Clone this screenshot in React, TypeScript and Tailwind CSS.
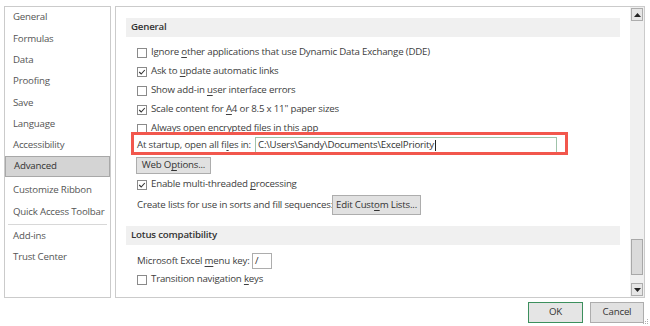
import React from 'react'

const NAV_TOP = ['General', 'Formulas', 'Data', 'Proofing', 'Save', 'Language', 'Accessibility']

function Check({ checked }: { checked?: boolean }) {
  return (
    <span className="w-[10px] h-[10px] border border-[#8a8a8a] bg-white flex items-center justify-center shrink-0">
      {checked && (
        <svg width="8" height="8" viewBox="0 0 8 8">
          <polyline points="1.2,4 3.2,6 6.8,2" fill="none" stroke="#333" strokeWidth="1.1" />
        </svg>
      )}
    </span>
  )
}

function CheckRow({ checked, children }: { checked?: boolean; children: React.ReactNode }) {
  return (
    <div className="h-[19px] flex items-center pl-[11px] gap-[4px]">
      <Check checked={checked} />
      <span className="whitespace-nowrap">{children}</span>
    </div>
  )
}

function U({ children }: { children: React.ReactNode }) {
  return <span className="underline underline-offset-2">{children}</span>
}

function Header({ children }: { children: React.ReactNode }) {
  return (
    <div className="h-[19px] mr-[10px] bg-[#f0f0f0] flex items-center pl-[5px] font-semibold text-[#333]">
      {children}
    </div>
  )
}

export default function App() {
  return (
    <div className="w-[650px] h-[326px] bg-white text-[9.7px] tracking-[-0.2px] text-[#404040] font-['Open_Sans',sans-serif] flex flex-col overflow-hidden relative">
      <div className="flex pt-[6px] pl-[4px] gap-[4px] h-[298px]">
        {/* Left nav */}
        <div className="w-[107px] border border-[#cbcbcb] flex flex-col text-[#555] whitespace-nowrap">
          {NAV_TOP.map((n) => (
            <div key={n} className="h-[21.3px] flex items-center pl-[8px]">{n}</div>
          ))}
          <div className="h-[21px] flex items-center pl-[8px] bg-[#d4d4d4] border border-[#a8a8a8] text-[#333]">Advanced</div>
          <div className="h-[3px]" />
          <div className="h-[21.3px] flex items-center pl-[8px]">Customize Ribbon</div>
          <div className="h-[21.3px] flex items-center pl-[8px]">Quick Access Toolbar</div>
          <div className="h-px bg-[#d8d8d8] mx-[3px] my-[1px]" />
          <div className="h-[21.3px] flex items-center pl-[8px]">Add-ins</div>
          <div className="h-[21.3px] flex items-center pl-[8px]">Trust Center</div>
        </div>

        {/* Right panel */}
        <div className="w-[530px] border border-[#cbcbcb] flex">
          <div className="flex-1 flex flex-col pl-[10px] pt-[11px] whitespace-nowrap">
            <Header>General</Header>
            <div className="h-[6px]" />
            <CheckRow>Ignore <U>o</U>ther applications that use Dynamic Data Exchange (DDE)</CheckRow>
            <CheckRow checked>Ask to <U>u</U>pdate automatic links</CheckRow>
            <CheckRow>Show add-in <U>u</U>ser interface errors</CheckRow>
            <CheckRow checked>Scale content for <U>A</U>4 or 8.5 x 11" paper sizes</CheckRow>
            <CheckRow>Always open encrypted files in this app</CheckRow>

            <div className="relative h-[16px] flex items-center pl-[11px] -mt-[1px]">
              <span className="w-[118px] shrink-0">At startup, open all fi<U>l</U>es in:</span>
              <div className="w-[302px] h-[16px] border border-[#9fc3aa] flex items-center pl-[2px] text-[#333]">
                <span>C:\Users\Sandy\Documents\ExcelPriority</span>
                <span className="w-px h-[11px] bg-[#222] ml-px" />
              </div>
              <div className="absolute left-[5px] top-[-5px] w-[437px] h-[23px] border-[3px] border-[#f2574d]" />
            </div>

            <div className="h-[4px]" />
            <div className="pl-[10px]">
              <div className="w-[75px] h-[17px] bg-[#e1e1e1] border border-[#adadad] flex items-center justify-center text-[#333]">
                <span>Web O<U>p</U>tions...</span>
              </div>
            </div>
            <div className="h-[1px]" />
            <CheckRow checked>Enable multi-threaded <U>p</U>rocessing</CheckRow>
            <div className="h-[1px]" />
            <div className="h-[20px] flex items-center pl-[11px]">
              <span className="w-[195px] shrink-0">Create lists for use in sorts and fill sequences:</span>
              <div className="w-[89px] h-[20px] bg-[#e1e1e1] border border-[#adadad] flex items-center justify-center text-[#333]">
                <span>Edit Cust<U>o</U>m Lists...</span>
              </div>
            </div>

            <div className="h-[11px]" />
            <Header>Lotus compatibility</Header>
            <div className="h-[8px]" />
            <div className="h-[16px] flex items-center pl-[11px]">
              <span className="w-[115px] shrink-0">Microsoft Excel <U>m</U>enu key:</span>
              <div className="w-[20px] h-[16px] border border-[#adadad] flex items-center pl-[2px] text-[#333]">/</div>
            </div>
            <div className="h-[1px]" />
            <CheckRow>Transition navigation <U>k</U>eys</CheckRow>
          </div>

          {/* Scrollbar */}
          <div className="w-[14px] bg-[#f0f0f0] flex flex-col items-center">
            <div className="mt-[1px] w-[12px] h-[13px] border border-[#adadad] bg-[#e6e6e6] flex items-center justify-center">
              <svg width="7" height="4" viewBox="0 0 7 4"><polygon points="0,4 7,4 3.5,0" fill="#222" /></svg>
            </div>
            <div className="flex-1" />
            <div className="w-[12px] h-[36px] bg-[#dadada] border border-[#a8a8a8]" />
            <div className="h-[8px]" />
            <div className="mb-[1px] w-[12px] h-[13px] border border-[#adadad] bg-[#e6e6e6] flex items-center justify-center">
              <svg width="7" height="4" viewBox="0 0 7 4"><polygon points="0,0 7,0 3.5,4" fill="#222" /></svg>
            </div>
          </div>
        </div>
      </div>

      {/* Bottom buttons */}
      <div className="flex justify-end gap-[7px] pr-[6px] pt-[4px]">
        <div className="w-[55px] h-[21px] border border-[#3c8f5d] bg-[#e5e5e5] flex items-center justify-center text-[#333]">OK</div>
        <div className="w-[54px] h-[21px] border border-[#adadad] bg-[#e1e1e1] flex items-center justify-center text-[#333]">Cancel</div>
      </div>
      <svg className="absolute right-[1px] bottom-[1px]" width="6" height="6" viewBox="0 0 6 6">
        <rect x="4" y="0" width="1" height="1" fill="#b0b0b0" />
        <rect x="2" y="2" width="1" height="1" fill="#b0b0b0" />
        <rect x="4" y="2" width="1" height="1" fill="#b0b0b0" />
        <rect x="0" y="4" width="1" height="1" fill="#b0b0b0" />
        <rect x="2" y="4" width="1" height="1" fill="#b0b0b0" />
        <rect x="4" y="4" width="1" height="1" fill="#b0b0b0" />
      </svg>
    </div>
  )
}
